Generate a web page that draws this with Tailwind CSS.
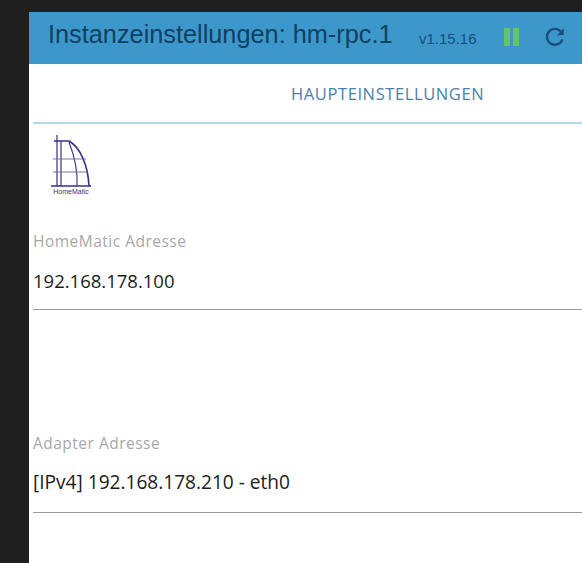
<!DOCTYPE html>
<html lang="de">
<head>
    <meta charset="UTF-8">
    <title>Instanzeinstellungen</title>
    <script src="https://cdn.jsdelivr.net/npm/@tailwindcss/browser@4"></script>
</head>
<body class="h-[563px] overflow-hidden bg-[#1f1f1f] pt-3 pl-[29px] font-['Open_Sans',sans-serif]">
    <div class="h-[551px] bg-white overflow-hidden">
        <!-- header -->
        <div class="h-[52px] bg-[#3c97cb] flex items-center pl-[19px] pb-[4px] font-['Liberation_Sans',sans-serif] text-[#12405f]">
            <h1 class="text-[25.3px] leading-none whitespace-nowrap w-[371px] -mt-[2px]">Instanzeinstellungen: hm-rpc.1</h1>
            <span class="text-[15px] leading-none mt-[5px] w-[85px] text-[#17507a]">v1.15.16</span>
            <div class="flex gap-[3px] w-[40px] mt-[2px]">
                <span class="w-[6px] h-[18px] bg-[#63c46d]"></span>
                <span class="w-[6px] h-[18px] bg-[#63c46d]"></span>
            </div>
            <svg class="w-[22px] h-[22px] mt-[2px]" viewBox="0 0 24 24" fill="none" stroke="#17527d" stroke-width="2.6">
                <path d="M20 14.5A8.6 8.6 0 1 1 18.6 6.4L20.5 8.5"/>
                <path d="M21.5 2.5V10H14Z" fill="#17527d" stroke="none"/>
            </svg>
        </div>

        <div class="pl-[4px]">
            <!-- tabs -->
            <div class="h-[60px] border-b-2 border-[#b5d6ea] flex items-center pl-[258px] pt-[2px]">
                <span class="text-[16.5px] tracking-[0.6px] text-[#4a80ad] leading-none whitespace-nowrap">HAUPTEINSTELLUNGEN</span>
            </div>

            <!-- logo -->
            <svg class="ml-[17px] mt-[11px] w-[42px] h-[62px]" viewBox="0 0 42 62" fill="none" stroke="#3a3185">
                <path d="M7 0V51M11 6V51" stroke-width="1.2"/>
                <path d="M4 6H19C30 12 38 30 39 51" stroke-width="1.6"/>
                <path d="M19 7C24 20 28 35 27 51" stroke-width="1.1"/>
                <path d="M3 24H36M3 37H38" stroke-width="0.9" stroke="#6a649f"/>
                <path d="M1 51H41" stroke-width="1.6"/>
                <text x="21" y="59" text-anchor="middle" font-size="7" font-family="Liberation Sans, sans-serif" fill="#3a3185" stroke="none">HomeMatic</text>
            </svg>

            <!-- fields -->
            <div class="mt-[35px]">
                <label class="block text-[15.5px] leading-[19px] text-[#a8a8a8] tracking-[0.49px]">HomeMatic Adresse</label>
                <div class="mt-[18px] text-[18.5px] leading-[23px] text-[#1c1c1c] h-[41px] border-b border-[#9a9a9a]">192.168.178.100</div>
            </div>
            <div class="mt-[124px]">
                <label class="block text-[15.5px] leading-[19px] text-[#a8a8a8] tracking-[0.49px]">Adapter Adresse</label>
                <div class="mt-[18px] text-[19.1px] leading-[23px] text-[#1c1c1c] h-[42px] border-b border-[#9a9a9a]">[IPv4] 192.168.178.210 - eth0</div>
            </div>
        </div>
    </div>
</body>
</html>
